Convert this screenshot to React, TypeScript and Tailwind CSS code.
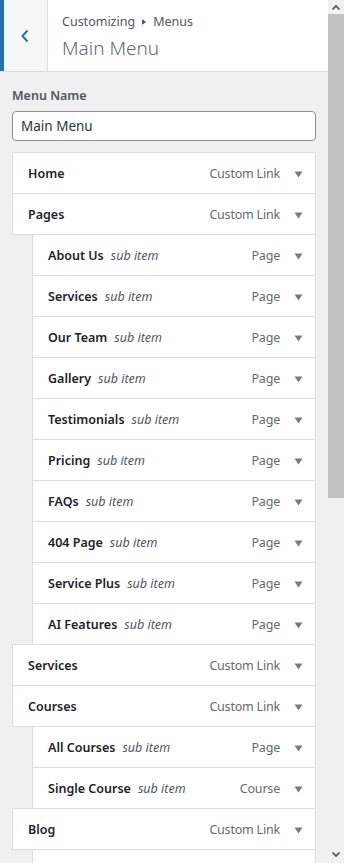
import React from "react";

type Item = { title: string; type: string; sub?: boolean; empty?: boolean };

const items: Item[] = [
  { title: "Home", type: "Custom Link" },
  { title: "Pages", type: "Custom Link" },
  { title: "About Us", type: "Page", sub: true },
  { title: "Services", type: "Page", sub: true },
  { title: "Our Team", type: "Page", sub: true },
  { title: "Gallery", type: "Page", sub: true },
  { title: "Testimonials", type: "Page", sub: true },
  { title: "Pricing", type: "Page", sub: true },
  { title: "FAQs", type: "Page", sub: true },
  { title: "404 Page", type: "Page", sub: true },
  { title: "Service Plus", type: "Page", sub: true },
  { title: "AI Features", type: "Page", sub: true },
  { title: "Services", type: "Custom Link" },
  { title: "Courses", type: "Custom Link" },
  { title: "All Courses", type: "Page", sub: true },
  { title: "Single Course", type: "Course", sub: true },
  { title: "Blog", type: "Custom Link" },
  { title: "", type: "", sub: true, empty: true },
];

function Arrow() {
  return (
    <svg width="9" height="7" viewBox="0 0 9 7" className="shrink-0">
      <path d="M0.5 0.5 L8.5 0.5 L4.5 6.5 Z" fill="#787c82" />
    </svg>
  );
}

function Row({ item, first }: { item: Item; first: boolean }) {
  return (
    <div
      className={`flex h-[42px] items-center border border-[#dcdcde] bg-white pl-[15px] pr-[12px] pt-[2px] ${
        item.sub ? "ml-[20px]" : ""
      } ${first ? "" : "-mt-px"}`}
    >
      {!item.empty && (
        <>
          <div className="flex min-w-0 flex-1 items-center">
            <span className="text-[12.5px] font-semibold text-[#1d2327]">{item.title}</span>
            {item.sub && (
              <span className="ml-[7px] text-[12.5px] italic text-[#50575e]">sub item</span>
            )}
          </div>
          <span className="text-[12.5px] tracking-[-0.2px] text-[#646970]">{item.type}</span>
          <span className="ml-[14px] flex w-[9px] items-center">
            <Arrow />
          </span>
        </>
      )}
    </div>
  );
}

export default function App() {
  return (
    <div className="flex h-[863px] w-[344px] overflow-hidden bg-[#f0f0f1] font-['Noto_Sans',sans-serif]">
      <div className="flex w-[328px] shrink-0 flex-col">
        <div className="flex h-[72px] shrink-0 border-b border-[#dcdcde] bg-white">
          <div className="flex w-[48px] shrink-0 items-center justify-center border-l-4 border-r border-l-[#2271b1] border-r-[#dcdcde] bg-[#f6f7f7] pr-[2px]">
            <svg width="10" height="14" viewBox="0 0 10 14">
              <path d="M7.5 1.5 L2.5 7 L7.5 12.5" fill="none" stroke="#2271b1" strokeWidth="2" />
            </svg>
          </div>
          <div className="flex flex-col pl-[14px] pt-[12px]">
            <div className="flex items-center text-[12.5px] leading-[20px] text-[#50575e]">
              <span>Customizing</span>
              <span className="mx-[7px] inline-block h-0 w-0 border-y-[3px] border-l-[4px] border-y-transparent border-l-[#50575e]" />
              <span>Menus</span>
            </div>
            <div className="mt-[2px] text-[19px] font-light leading-[28px] text-[#646970]">Main Menu</div>
          </div>
        </div>
        <div className="flex flex-col px-[12px] pt-[14px]">
          <div className="text-[12.5px] font-semibold leading-[20px] text-[#50575e]">Menu Name</div>
          <div className="mt-[5px] flex h-[30px] items-center rounded-[4px] border border-[#8c8f94] bg-white pl-[8px] text-[13.5px] text-[#2c3338]">
            Main Menu
          </div>
          <div className="mt-[11px] flex flex-col">
            {items.map((it, i) => (
              <Row key={i} item={it} first={i === 0} />
            ))}
          </div>
        </div>
      </div>
      <div className="flex w-[16px] shrink-0 flex-col bg-[#f1f1f1]">
        <div className="flex h-[14px] items-center justify-center">
          <svg width="8" height="5" viewBox="0 0 8 5">
            <path d="M0.5 4.5 L4 1 L7.5 4.5" fill="none" stroke="#505050" strokeWidth="1.6" />
          </svg>
        </div>
        <div className="h-[484px] bg-[#c1c1c1]" />
        <div className="flex-1" />
        <div className="flex h-[16px] items-center justify-center pb-[2px]">
          <svg width="8" height="5" viewBox="0 0 8 5">
            <path d="M0.5 0.5 L4 4 L7.5 0.5" fill="none" stroke="#505050" strokeWidth="1.6" />
          </svg>
        </div>
      </div>
    </div>
  );
}
